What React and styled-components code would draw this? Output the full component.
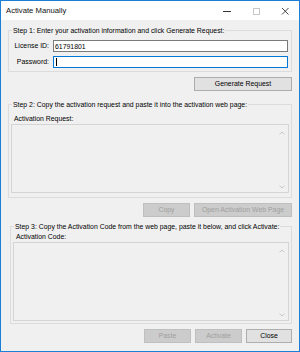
import React from "react";
import styled, {createGlobalStyle} from "styled-components";

const GlobalStyle = createGlobalStyle`
  body {
    margin: 0;
    background: #fff;
  }

  * {
    box-sizing: border-box;
  }
`

const Minimize = () => (
    <svg width="10" height="10" viewBox="0 0 10 10">
        <line x1="1" y1="5.5" x2="9" y2="5.5" stroke="#333" strokeWidth="1"/>
    </svg>
)

const Maximize = () => (
    <svg width="10" height="10" viewBox="0 0 10 10">
        <rect x="2.5" y="2.5" width="6" height="6" fill="none" stroke="#c8c8c8" strokeWidth="1"/>
    </svg>
)

const CloseIcon = () => (
    <svg width="10" height="10" viewBox="0 0 10 10">
        <path d="M2 2 L8.5 8.5 M8.5 2 L2 8.5" stroke="#333" strokeWidth="0.9"/>
    </svg>
)

const Chevron = ({up}) => (
    <svg width="6" height="4" viewBox="0 0 6 4">
        <path d={up ? "M0.5 3.5 L3 1 L5.5 3.5" : "M0.5 0.5 L3 3 L5.5 0.5"}
              fill="none" stroke="#c2c2c2" strokeWidth="0.9"/>
    </svg>
)

const ScrollText = ({height}) => (
    <TextArea $h={height}>
        <ScrollColumn>
            <Chevron up/>
            <Chevron/>
        </ScrollColumn>
    </TextArea>
)

const App = () => {
    return (
        <>
            <GlobalStyle/>
            <Window>
                <TitleBar>
                    <Title>Activate Manually</Title>
                    <CaptionButton><Minimize/></CaptionButton>
                    <CaptionButton><Maximize/></CaptionButton>
                    <CaptionButton><CloseIcon/></CaptionButton>
                </TitleBar>
                <Body>
                    <Group $top={0}>
                        <Legend>Step 1: Enter your activation information and click Generate Request:</Legend>
                        <Fields>
                            <FieldLabel>License ID:</FieldLabel>
                            <TextBox>61791801</TextBox>
                            <FieldLabel>Password:</FieldLabel>
                            <TextBox $focused><Caret/></TextBox>
                        </Fields>
                    </Group>
                    <ButtonRow $top={5}>
                        <Button $w={98}>Generate Request</Button>
                    </ButtonRow>

                    <Group $top={8}>
                        <Legend>Step 2: Copy the activation request and paste it into the activation web page:</Legend>
                        <GroupContent $pt={4} $pb={4}>
                            <AreaLabel>Activation Request:</AreaLabel>
                            <ScrollText height={69}/>
                        </GroupContent>
                    </Group>
                    <ButtonRow $top={5}>
                        <Button $w={47} disabled>Copy</Button>
                        <Button $w={98} disabled>Open Activation Web Page</Button>
                    </ButtonRow>

                    <Group $top={4} $inset={2}>
                        <Legend>Step 3: Copy the Activation Code from the web page, paste it below, and click Activate:</Legend>
                        <GroupContent $pt={0} $pb={2}>
                            <AreaLabel>Activation Code:</AreaLabel>
                            <ScrollText height={79}/>
                        </GroupContent>
                    </Group>
                    <ButtonRow $top={5}>
                        <Button $w={47} disabled>Paste</Button>
                        <Button $w={47} disabled>Activate</Button>
                        <Button $w={46}>Close</Button>
                    </ButtonRow>
                </Body>
            </Window>
        </>
    )
}

const Window = styled.div`
  width: 300px;
  height: 352px;
  border: 1px solid #1b80d5;
  display: flex;
  flex-direction: column;
  background: #f0f0f0;
  font-family: "Liberation Sans", Arial, sans-serif;
  font-size: 6.9px;
  color: #000;
  overflow: hidden;
`

const TitleBar = styled.div`
  height: 19px;
  flex-shrink: 0;
  display: flex;
  align-items: center;
  background: #fff;
`

const Title = styled.div`
  flex: 1;
  padding-left: 5px;
  font-size: 7.7px;
  color: #111;
`

const CaptionButton = styled.div`
  width: 29px;
  height: 19px;
  display: flex;
  align-items: center;
  justify-content: center;
`

const Body = styled.div`
  flex: 1;
  display: flex;
  flex-direction: column;
  padding: 5px 7px 0;
`

const Group = styled.fieldset`
  margin: ${p => p.$top}px 0 0 ${p => p.$inset || 0}px;
  padding: 0;
  min-width: 0;
  border: 1px solid #dcdcdc;
`

const Legend = styled.legend`
  margin-left: 3px;
  padding: 0 1px;
  line-height: 11px;
  font-size: 6.9px;
  white-space: nowrap;
`

const Fields = styled.div`
  display: grid;
  grid-template-columns: 44px 1fr;
  row-gap: 4px;
  align-items: center;
  padding: 4px 3px 3px 0;
`

const FieldLabel = styled.div`
  text-align: right;
  padding-right: 4px;
  line-height: 12px;
`

const TextBox = styled.div`
  height: 12px;
  display: flex;
  align-items: center;
  padding-left: 1px;
  background: #fff;
  border: 1px solid ${p => p.$focused ? '#0078d7' : '#7a7a7a'};
`

const Caret = styled.span`
  width: 1px;
  height: 8px;
  margin-left: 1px;
  background: #000;
`

const GroupContent = styled.div`
  padding: ${p => p.$pt}px 2px ${p => p.$pb}px;
`

const AreaLabel = styled.div`
  line-height: 10px;
  padding-left: 3px;
`

const TextArea = styled.div`
  height: ${p => p.$h}px;
  display: flex;
  justify-content: flex-end;
  border: 1px solid #d4d4d4;
  background: #f0f0f0;
`

const ScrollColumn = styled.div`
  width: 12px;
  display: flex;
  flex-direction: column;
  align-items: center;
  justify-content: space-between;
  padding: 6px 0 3px;
`

const ButtonRow = styled.div`
  display: flex;
  justify-content: flex-end;
  gap: 4px;
  margin-top: ${p => p.$top}px;
`

const Button = styled.button`
  width: ${p => p.$w}px;
  height: 14px;
  padding: 0;
  font: inherit;
  line-height: 12px;
  color: #000;
  background: #e1e1e1;
  border: 1px solid #adadad;
  white-space: nowrap;

  &:disabled {
    color: #a0a0a0;
    background: #cccccc;
    border-color: #bfbfbf;
  }
`

export default App
